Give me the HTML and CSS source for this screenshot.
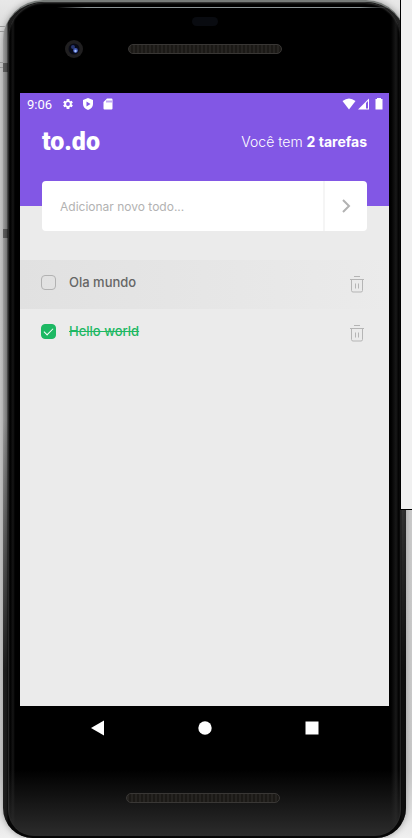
FILE: index.html
```
<!DOCTYPE html>
<html lang="pt-BR">
<head>
<meta charset="utf-8">
<meta name="viewport" content="width=device-width, initial-scale=1">
<title>to.do</title>
<link rel="stylesheet" href="styles.css">
</head>
<body>
<div class="phone">
 <div class="face">
  <div class="bezel-top">
    <span class="sensor"></span>
    <svg class="camera" viewBox="0 0 18 18" aria-hidden="true"><circle cx="9" cy="9" r="9" fill="#201f20"/><circle cx="9" cy="9" r="5.5" fill="#080a16"/><circle cx="8" cy="7" r="2" fill="#27366f"/><circle cx="10.5" cy="10.5" r="2.4" fill="#4259b5"/><circle cx="10.5" cy="11" r="1.2" fill="#a9c4ff"/></svg>
    <span class="speaker"></span>
  </div>
  <main class="screen">
    <header class="header">
      <div class="status">
        <span class="clock">9:06</span>
        <svg viewBox="0 0 24 24"><path fill="#fff" fill-rule="evenodd" d="M19.4 13a7.500 7.500 0 0 0 0-2l2.300-1.700-2.200-4-2.700 1.100-1.700-1L14.700 2h-5.400l-.4 3.400-1.700 1-2.700-1.100-2.200 4L4.600 11a7.500 7.500 0 0 0 0 2l-2.300 1.700 2.200 4 2.700-1.100 1.700 1 .4 3.400h5.400l.4-3.400 1.700-1 2.700 1.100 2.200-4zM12 15.800a3.800 3.800 0 1 1 0-7.600 3.800 3.800 0 0 1 0 7.600z"/></svg>
        <svg viewBox="0 0 24 24"><path fill="#fff" fill-rule="evenodd" d="M12 0 2 4v8c0 5.500 4 10 10 12 6-2 10-6.500 10-12V4zM9 7l8 5-8 5z"/></svg>
        <svg viewBox="0 0 24 24"><path fill="#fff" fill-rule="evenodd" d="M10 1h9q2 0 2 2v18q0 2-2 2H5q-2 0-2-2V8zM9 5v4h2V5zm4 0v4h2V5zm4 0v4h2V5z"/></svg>
        <span class="signals">
          <svg class="wifi" viewBox="0 0 14 12"><path fill="#fff" d="M.5 3Q7-2 13.500 3L7 11.500z"/></svg>
          <svg viewBox="0 0 12 12"><path fill="#fff" d="m0 11.500 11-11v11z"/><path d="M8 5v5.500h2V3z" fill="#8257e5"/></svg>
          <svg class="battery" viewBox="0 0 8 12"><path fill="#fff" d="M2 0h4v1h1.500v10.500h-7V1H2z"/></svg>
        </span>
      </div>
      <div class="title-row">
        <h1 class="logo">to.do</h1>
        <p class="counter">Você tem <b>2 tarefas</b></p>
      </div>
    </header>
    <form class="new-task">
      <input type="text" placeholder="Adicionar novo todo..." aria-label="Adicionar novo todo">
      <button type="button" aria-label="Adicionar"><svg viewBox="0 0 24 24"><path d="m9 6 6 6-6 6" fill="none" stroke="#b2b2b2" stroke-width="2"/></svg></button>
    </form>
    <ul class="tasks">
      <li class="task">
        <label><input type="checkbox"><span>Ola mundo</span></label>
        <button type="button" aria-label="Remover Ola mundo"><svg viewBox="0 0 14 17"><path d="M4 .5h6M0 3.500h14M1.500 4v10.500q0 1.500 1.500 1.500h8q1.500 0 1.500-1.500V4M5.500 7.500v5M8.500 7.500v5" fill="none" stroke="#b5b5b5"/></svg></button>
      </li>
      <li class="task done">
        <label><input type="checkbox" checked><span>Hello world</span></label>
        <button type="button" aria-label="Remover Hello world"><svg viewBox="0 0 14 17"><path d="M4 .5h6M0 3.500h14M1.500 4v10.500q0 1.500 1.500 1.500h8q1.500 0 1.500-1.500V4M5.500 7.500v5M8.500 7.500v5" fill="none" stroke="#b5b5b5"/></svg></button>
      </li>
    </ul>
  </main>
  <nav class="nav">
    <button type="button" aria-label="Voltar"><svg viewBox="0 0 14 16"><path d="M13 .5v15L0 8z" fill="#fff"/></svg></button>
    <button type="button" aria-label="Início"><svg viewBox="0 0 14 16"><circle cx="7" cy="8" r="6.700" fill="#fff"/></svg></button>
    <button type="button" aria-label="Recentes"><svg viewBox="0 0 14 16"><path d="M.5 1.500h13v13H.5z" fill="#fff"/></svg></button>
  </nav>
  <div class="bezel-bottom"><span class="speaker"></span></div>
 </div>
</div>
<div class="side-panel"></div>
</body>
</html>
```
FILE: styles.css
```
* { box-sizing: border-box; }

body {
  margin: 0;
  min-height: 100vh;
  padding: 0 6px 0 3px;
  display: flex;
  position: relative;
  overflow-x: hidden;
  background:
    linear-gradient(#0000 26px, #999 26px 27px, #0000 27px 31px, #999 31px 32px, #0000 32px 62px, #999 62px 63px, #0000 63px 67px, #999 67px 68px, #0000 68px) 0 0 / 5px 100% no-repeat,
    linear-gradient(#e8e8e8, #cfcfcf 8%, #c9c9c9 92%, #f0f0f0);
  font-family: Inter, Roboto, sans-serif;
}

button {
  border: 0;
  padding: 0;
  background: none;
  display: grid;
  place-items: center;
}

.phone {
  flex: 1;
  display: flex;
  padding: 0 5px 2px;
  border-radius: 40px 40px 30px 30px;
  border-top: 2px solid #777b79;
  background:
    linear-gradient(#0000 61px, #0006 61px 70px, #0000 70px 227px, #0006 227px 236px, #0000 236px) 0 0 / 6px 100% no-repeat,
    linear-gradient(#0000 50%, #000c 80%),
    linear-gradient(90deg, #a0a0a0 0, #747474 4px, #1c1c1c 5px, #222 calc(100% - 5px), #484848 calc(100% - 4px), #383838);
  box-shadow: 0 0 6px #999;
}

.face {
  flex: 1;
  display: flex;
  flex-direction: column;
  padding: 0 12px;
  border-radius: 36px 36px 26px 26px;
  background:
    linear-gradient(#0000 92%, #2c2c2c),
    linear-gradient(90deg, #262626 0, #000 2px, #151515 5px, #000 7px, #000 calc(100% - 10px), #181818 calc(100% - 5px), #000 calc(100% - 2px), #1c1c1c);
  box-shadow: inset 0 1px 2px #444;
}

.bezel-top {
  height: 91px;
  display: grid;
  grid-template-columns: 1fr 154px 1fr;
  grid-template-rows: 38px 18px;
  align-items: center;
  background: linear-gradient(90deg, #0000 10%, #8c9496 18% 92%, #0000) 0 5px / 100% 1px no-repeat;
}

.sensor {
  grid-column: 2;
  justify-self: center;
  width: 26px;
  height: 9px;
  border-radius: 5px;
  background: #090b10;
}

.camera {
  grid-area: 2 / 1;
  justify-self: center;
  width: 18px;
  height: 18px;
}

.speaker {
  grid-area: 2 / 2;
  width: 154px;
  height: 10px;
  border: 1px solid #393735;
  border-radius: 5px;
  background: repeating-linear-gradient(90deg, #262421 0 2px, #1b1916 2px 4px);
}

.screen {
  flex: 1;
  background: #ebebeb;
}

.header {
  height: 113px;
  background: #8257e5;
  color: #fff;
}

.status {
  height: 22px;
  padding: 0 6px 0 7px;
  display: flex;
  align-items: center;
  gap: 8px;
}

.status svg { width: 12px; height: 12px; }
.clock { margin-right: 2px; font: 13px Roboto, sans-serif; }
.signals { margin-left: auto; display: flex; gap: 2px; }
.status .wifi { width: 14px; }
.status .battery { width: 8px; margin-left: 3px; }

.title-row {
  height: 52px;
  padding: 0 22px;
  display: flex;
  justify-content: space-between;
  align-items: center;
}

.logo {
  margin: 0;
  font: 900 25px Roboto, sans-serif;
}

.counter { margin: 0; font-size: 14px; font-weight: 300; }
.counter b { font-weight: 700; }

.new-task {
  height: 50px;
  margin: -25px 22px 0;
  display: flex;
  border-radius: 4px;
  background: #fff;
}

.new-task input {
  flex: 1;
  min-width: 0;
  padding: 0 18px;
  border: 0;
  border-right: 2px solid #f5f5f5;
  border-radius: 4px 0 0 4px;
  background: none;
  font: 12px Inter, Roboto, sans-serif;
}

.new-task input::placeholder { color: #b2b2b2; opacity: 1; }
.new-task button { width: 42px; }
.new-task svg { width: 24px; height: 24px; }

.tasks {
  margin: 29px 0 0;
  padding: 0;
  list-style: none;
}

.task {
  height: 49px;
  padding: 0 25px 0 21px;
  display: flex;
  align-items: center;
  justify-content: space-between;
  background: linear-gradient(90deg, #e1e1e1, #ebebeb);
}

.task label {
  display: flex;
  align-items: center;
  gap: 13px;
  padding-bottom: 5px;
  font-size: 13px;
  font-weight: 500;
  color: #666;
}

.task input {
  appearance: none;
  width: 15px;
  height: 15px;
  margin: 0;
  border: 1px solid #b2b2b2;
  border-radius: 4px;
}

.task svg { width: 14px; height: 17px; }

.done { background: none; }
.done label { color: #1db863; text-decoration: line-through; }

.done input {
  border-color: #1db863;
  background: #1db863;
  display: grid;
  place-items: center;
}

.done input::before {
  content: "";
  width: 8px;
  height: 4px;
  margin-bottom: 2px;
  border: solid #fff;
  border-width: 0 0 1px 1px;
  transform: rotate(-45deg);
}

.nav {
  height: 44px;
  padding: 0 24px;
  display: grid;
  grid-template-columns: repeat(3, 1fr);
}

.nav svg { width: 14px; height: 16px; }

.bezel-bottom {
  height: 86px;
  padding: 43px 4px 0 0;
  display: flex;
  justify-content: center;
  align-items: flex-start;
}

.side-panel {
  position: absolute;
  top: 0;
  right: 0;
  width: 12px;
  height: 510px;
  border: solid #000;
  border-width: 0 0 1px 1px;
  background: #f0f0f0;
}
```
